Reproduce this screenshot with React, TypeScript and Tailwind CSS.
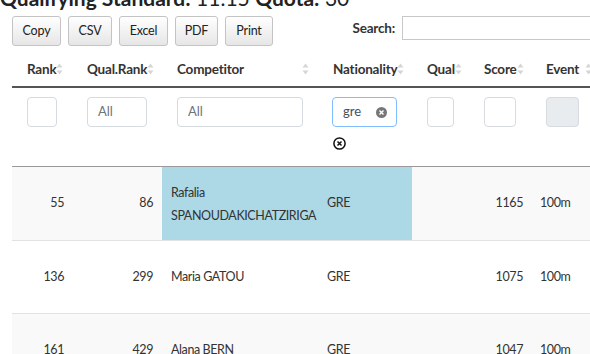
import React from "react";

const Sort = () => (
  <svg width="7" height="12" viewBox="0 0 7 12" className="shrink-0">
    <path d="M3.5 0.5 L6.5 4.5 L0.5 4.5 Z" fill="#d6d6d6" />
    <path d="M3.5 11.5 L6.5 7.5 L0.5 7.5 Z" fill="#d6d6d6" />
  </svg>
);

const Btn = ({ children, w }: { children: React.ReactNode; w: string }) => (
  <button
    className={`${w} h-[30px] rounded-[3px] border border-[#c4c4c4] bg-gradient-to-b from-white to-[#e6e6e6] text-[12.5px] tracking-[-0.2px] text-[#222] flex items-center justify-center`}
  >
    {children}
  </button>
);

const cols = [
  { name: "Rank", w: "w-[60px]" },
  { name: "Qual.Rank", w: "w-[90px]" },
  { name: "Competitor", w: "w-[156px]" },
  { name: "Nationality", w: "w-[94px]" },
  { name: "Qual", w: "w-[57px]" },
  { name: "Score", w: "w-[62px]" },
  { name: "Event", w: "w-[70px]" },
];

export default function App() {
  return (
    <div
      className="w-[590px] h-[354px] overflow-hidden bg-white text-[#333]"
      style={{ fontFamily: "Lato, 'Noto Sans', sans-serif" }}
    >
      <div className="h-[16px] overflow-hidden relative">
        <div className="text-[21px] leading-[21px] mt-[-13px] whitespace-nowrap text-[#222]">
          <b>Qualifying Standard:</b> 11.15 <b>Quota:</b> 30
        </div>
      </div>
      <div className="flex items-start pl-[12px]">
        <div className="flex gap-[7px]">
          <Btn w="w-[49px]">Copy</Btn>
          <Btn w="w-[44px]">CSV</Btn>
          <Btn w="w-[49px]">Excel</Btn>
          <Btn w="w-[43px]">PDF</Btn>
          <Btn w="w-[48px]">Print</Btn>
        </div>
        <div className="ml-auto flex items-center gap-[7px] h-[24px] mr-[-4px]">
          <span className="font-bold text-[13.5px] tracking-[-0.2px]">Search:</span>
          <div className="w-[192px] h-[24px] border border-[#c8c8c8] bg-white" />
        </div>
      </div>
      <div className="ml-[12px] mt-[6px] w-[592px]">
        {/* header */}
        <div className="flex h-[36px] border-b-2 border-[#555]">
          {cols.map((c) => (
            <div
              key={c.name}
              className={`${c.w} flex items-center justify-between pl-[15px] pr-[9px] font-bold text-[13.5px] tracking-[-0.2px]`}
            >
              <span>{c.name}</span>
              <Sort />
            </div>
          ))}
        </div>
        {/* filter */}
        <div className="flex h-[79px] border-b border-[#999] pt-[9px]">
          <div className="w-[60px] pl-[15px]">
            <div className="w-[30px] h-[30px] rounded-[4px] border border-[#d5dbe1]" />
          </div>
          <div className="w-[90px] pl-[15px]">
            <div className="w-[60px] h-[30px] rounded-[4px] border border-[#d5dbe1] flex items-center pl-[10px] text-[13px] text-[#6c757d]">
              All
            </div>
          </div>
          <div className="w-[156px] pl-[15px]">
            <div className="w-[126px] h-[30px] rounded-[4px] border border-[#d5dbe1] flex items-center pl-[10px] text-[13px] text-[#6c757d]">
              All
            </div>
          </div>
          <div className="w-[94px] pl-[14px] flex flex-col">
            <div className="w-[65px] h-[30px] rounded-[4px] border border-[#80bdff] flex items-center pl-[10px] pr-[9px] text-[13px] text-[#495057] justify-between">
              <span>gre</span>
              <svg width="11" height="11" viewBox="0 0 11 11">
                <circle cx="5.5" cy="5.5" r="5.5" fill="#777" />
                <path d="M3.5 3.5 L7.5 7.5 M7.5 3.5 L3.5 7.5" stroke="#fff" strokeWidth="1.4" />
              </svg>
            </div>
            <svg width="13" height="13" viewBox="0 0 13 13" className="ml-[1px] mt-[10px]">
              <circle cx="6.5" cy="6.5" r="5.6" fill="none" stroke="#111" strokeWidth="1.5" />
              <path d="M4.5 4.5 L8.5 8.5 M8.5 4.5 L4.5 8.5" stroke="#111" strokeWidth="1.5" />
            </svg>
          </div>
          <div className="w-[57px] pl-[15px]">
            <div className="w-[27px] h-[30px] rounded-[4px] border border-[#d5dbe1]" />
          </div>
          <div className="w-[62px] pl-[15px]">
            <div className="w-[32px] h-[30px] rounded-[4px] border border-[#d5dbe1]" />
          </div>
          <div className="w-[70px] pl-[15px]">
            <div className="w-[33px] h-[30px] rounded-[4px] border border-[#d5dbe1] bg-[#e9ecef]" />
          </div>
        </div>
        {/* row 1 */}
        <div className="flex h-[74px] bg-[#f9f9f9] border-b border-[#e2e2e2] text-[12.5px] tracking-[-0.4px]">
          <div className="w-[60px] flex items-center justify-end pr-[8px]">55</div>
          <div className="w-[90px] flex items-center justify-end pr-[9px]">86</div>
          <div className="w-[156px] bg-[#add8e6] flex items-center pl-[9px] leading-[23px] whitespace-nowrap">
            <span>
              Rafalia
              <br />
              SPANOUDAKICHATZIRIGA
            </span>
          </div>
          <div className="w-[94px] bg-[#add8e6] flex items-center pl-[9px]">GRE</div>
          <div className="w-[57px]" />
          <div className="w-[62px] flex items-center justify-end pr-[8px]">1165</div>
          <div className="w-[70px] flex items-center pl-[9px]">100m</div>
        </div>
        {/* row 2 */}
        <div className="flex h-[73px] bg-white border-b border-[#e2e2e2] text-[12.5px] tracking-[-0.4px]">
          <div className="w-[60px] flex items-center justify-end pr-[8px]">136</div>
          <div className="w-[90px] flex items-center justify-end pr-[9px]">299</div>
          <div className="w-[156px] flex items-center pl-[9px]">Maria GATOU</div>
          <div className="w-[94px] flex items-center pl-[9px]">GRE</div>
          <div className="w-[57px]" />
          <div className="w-[62px] flex items-center justify-end pr-[8px]">1075</div>
          <div className="w-[70px] flex items-center pl-[9px]">100m</div>
        </div>
        {/* row 3 */}
        <div className="flex h-[73px] bg-[#f9f9f9] text-[12.5px] tracking-[-0.4px]">
          <div className="w-[60px] flex items-center justify-end pr-[8px]">161</div>
          <div className="w-[90px] flex items-center justify-end pr-[9px]">429</div>
          <div className="w-[156px] flex items-center pl-[9px]">Alana BERN</div>
          <div className="w-[94px] flex items-center pl-[9px]">GRE</div>
          <div className="w-[57px]" />
          <div className="w-[62px] flex items-center justify-end pr-[8px]">1047</div>
          <div className="w-[70px] flex items-center pl-[9px]">100m</div>
        </div>
      </div>
    </div>
  );
}
